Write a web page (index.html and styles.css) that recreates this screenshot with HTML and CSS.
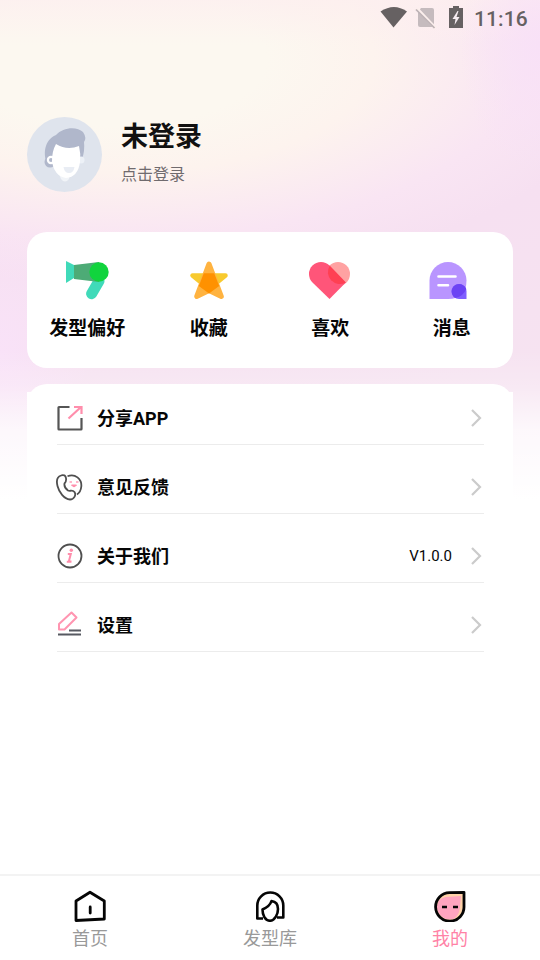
FILE: index.html
```html
<!DOCTYPE html>
<html lang="zh-CN">
<head>
<meta charset="utf-8">
<title>我的</title>
<link rel="stylesheet" href="styles.css">
</head>
<body>
<div class="screen">
  <header class="status">
    <svg width="28" height="24" viewBox="380 5 28 24"><path d="M380.500 11.500Q394 2.500 407 11.500L393.500 27.500Z" fill="#666162"/></svg>
    <svg width="22" height="24" viewBox="415 5 22 24"><path d="M421 8h11a2 2 0 0 1 2 2v15a2 2 0 0 1-2 2h-12a2 2 0 0 1-2-2V12Z" fill="#c5bbbe"/><path d="M417 8.500L435.500 28" stroke="#fcefed" stroke-width="3"/><path d="M416 9.500L434.500 28" stroke="#bdb2b5" stroke-width="1.700"/></svg>
    <svg width="16" height="24" viewBox="448 5 16 24"><path d="M449 8h4V6h6v2h4v20h-14Z" fill="#666162"/><path d="M457.500 11l-5 8h3l-1 6 5-8h-3l2-6Z" fill="#f7edf2"/></svg>
    <span class="clock">11:16</span>
  </header>
  <section class="profile">
    <svg class="avatar" viewBox="0 0 75 75">
      <circle cx="37.500" cy="37.500" r="37.500" fill="#dfe4ed"/>
      <path d="M20 47C16 37 17 23 29 18C36 10 50 9 56 15Q60 21 57 25Q58 34 55 42L22 47Z" fill="#b0b7cb"/>
      <circle cx="23" cy="45" r="5.500" fill="#b0b7cb"/>
      <circle cx="24" cy="43" r="4.200" fill="#fff"/><circle cx="24" cy="43" r="2" fill="#b0b7cb"/>
      <path d="M32 57h11l-1 5q-4 5-8 0Z" fill="#f1f4f8"/>
      <circle cx="54" cy="43" r="3.500" fill="#edf1f7"/>
      <path d="M29 27Q40 34 52 29Q54 37 53 45Q51 60 39 61Q27 59 25 44Q25 34 29 27Z" fill="#fff"/>
      <path d="M36.500 50h11q-1 6-5.500 6t-5.500-6Z" fill="#e9edf4"/>
    </svg>
    <div class="identity"><h1>未登录</h1><p>点击登录</p></div>
  </section>
  <nav class="shortcuts">
    <a class="shortcut">
      <svg viewBox="64 260 46 40"><path d="M99 281L91.600 293.700" stroke="#40dab9" stroke-width="11" stroke-linecap="round"/><path d="M66 261l8 4v13l-8 5Z" fill="#40dab9"/><path d="M74 265l25-3v20l-25-3Z" fill="#4dab76"/><circle cx="99" cy="272" r="9.700" fill="#11d43d"/></svg>
      <span>发型偏好</span>
    </a>
    <a class="shortcut">
      <svg viewBox="185.500 260 46 40"><path d="M192 275.500h33L208.500 289Z" fill="#f8ca2e" stroke="#f8ca2e" stroke-width="4.500" stroke-linejoin="round"/><path d="M208.500 264L220.800 296.500L208.500 290.500L196.200 296.500Z" fill="#ffb340" stroke="#ffb340" stroke-width="5" stroke-linejoin="round"/><path d="M203.300 273.300h10.400l5 12.700L208.500 293.500L198.300 286Z" fill="#ff9100"/></svg>
      <span>收藏</span>
    </a>
    <a class="shortcut">
      <svg viewBox="307 260 46 40"><circle cx="338" cy="274" r="12" fill="#ffa2a2"/><path d="M345.800 282.500L329.500 299L312.500 282.500A12 12 0 0 1 329.500 265.500Z" fill="#ff5579"/><path d="M329.700 265.700L345.800 282.500A12 12 0 0 1 329.700 265.700Z" fill="#ff4053"/></svg>
      <span>喜欢</span>
    </a>
    <a class="shortcut shifted">
      <svg viewBox="424.500 260 46 40"><path d="M429 299V280.500A18.500 18.500 0 0 1 466 280.500Q466 299 447.500 299Z" fill="#b995ff"/><path d="M438 276.500h17M438 285.200h9.500" stroke="#fff" stroke-width="2.600" stroke-linecap="round"/><path d="M458.500 284A7.500 7.500 0 1 0 458.500 299H466V291.500A7.500 7.500 0 0 0 458.500 284Z" fill="#805fff"/><path d="M465.700 289A7.500 7.500 0 1 0 455 298.100Q463 296 465.700 289Z" fill="#6c43f4"/></svg>
      <span>消息</span>
    </a>
  </nav>
  <main class="menu">
    <a class="row">
      <svg class="icon" viewBox="56 404 28 28" fill="none" stroke-width="2.200"><path d="M69.500 407H59q-.500 0-.500.500V429q0 .500.500.500h22q.500 0 .500-.500V418" stroke="#555"/><path d="M68.500 418.500L81 407M74 407h7.500v7" stroke="#ff8eac"/></svg>
      <span>分享APP</span>
      <svg class="arrow" viewBox="0 0 12 20"><path d="M2 2l8 8-8 8"/></svg>
    </a>
    <a class="row">
      <svg class="icon" viewBox="56 473 28 28" fill="none" stroke="#4f4f4f" stroke-width="1.800"><path d="M61 475.500C56.500 477 56.500 482 57.500 486C59 492 64 499 70 499.500C74 499.500 76.500 495 74.500 492C72.500 489.500 70 491.500 68 490.500C66 489 64 486 64.500 483.500C67 481 66.500 475.500 63.500 475.200Q62 475 61 475.500Z"/><path d="M67.500 476.300C75 473 82 479 81.300 486.500Q80.800 492 77 494.500"/><path d="M69.500 482h2.500M76 482h2.500" stroke="#ff9fb9" stroke-width="1.700"/><path d="M71.500 485q2.500 3.500 5 0Z" fill="#ff8eac" stroke="#ff8eac" stroke-width="1"/></svg>
      <span>意见反馈</span>
      <svg class="arrow" viewBox="0 0 12 20"><path d="M2 2l8 8-8 8"/></svg>
    </a>
    <a class="row">
      <svg class="icon" viewBox="56 542 28 28" fill="none"><circle cx="70" cy="556" r="11.500" stroke="#4f4f4f" stroke-width="1.800"/><path d="M67.800 554h3l-2 7.500h2.700M66.800 561.700h4.500" stroke="#ff8eac" stroke-width="2"/><circle cx="71.300" cy="550.300" r="1.700" fill="#ff8eac"/></svg>
      <span>关于我们</span><small>V1.0.0</small>
      <svg class="arrow" viewBox="0 0 12 20"><path d="M2 2l8 8-8 8"/></svg>
    </a>
    <a class="row">
      <svg class="icon" viewBox="56 611 28 28" fill="none" stroke-width="2" stroke-linejoin="round"><path d="M59 629.500V624L71.500 612.500L76.500 617.500L64.500 629.500Z" stroke="#ff95b1"/><path d="M69 630.500h12M58 634.500h23" stroke="#565961"/></svg>
      <span>设置</span>
      <svg class="arrow" viewBox="0 0 12 20"><path d="M2 2l8 8-8 8"/></svg>
    </a>
  </main>
  <footer class="tabs">
    <a class="tab">
      <svg viewBox="74 890 32 32" fill="none" stroke="#050505" stroke-width="2.800" stroke-linejoin="round"><path d="M90 892.200L104.300 901V919L76 920.500V901Z"/><path d="M90.200 907v6" stroke-linecap="round" stroke-width="2.800"/></svg>
      <span>首页</span>
    </a>
    <a class="tab">
      <svg viewBox="254 890 32 32" fill="none" stroke="#050505" stroke-width="2.600" stroke-linejoin="round"><path d="M263 918.500H257.300V905.500A13 13 0 0 1 283.300 905.500V917.500H277"/><path d="M271.500 901C270 906 266 908 262.500 909.500C262.500 915 265 920.500 270 920.800C275 920.500 278 914 278 909C278 904 275.500 901.500 271.500 901Z"/></svg>
      <span>发型库</span>
    </a>
    <a class="tab active">
      <svg viewBox="434 890 32 32"><path d="M464 892.300V905.500A14.500 14.500 0 1 1 449.500 892.700Z" fill="#ffd2a8"/><path d="M461 896L460 907Q459 919 450 919.500A13 13 0 0 1 437 906Q438 898 446 897Z" fill="#ffa4bf"/><path d="M464 892.300V906.500A14.200 14.200 0 1 1 449.500 892.700Z" fill="none" stroke="#050505" stroke-width="2.800" stroke-linejoin="round"/><path d="M442 907h5M453 907h5" stroke="#050505" stroke-width="2.600"/></svg>
      <span>我的</span>
    </a>
  </footer>
</div>
</body>
</html>
```
FILE: styles.css
```css
* { box-sizing: border-box; }
body { margin: 0; font-family: Roboto, "Noto Sans CJK SC", sans-serif; color: #060606; }
.screen {
  width: 540px;
  height: 960px;
  display: flex;
  flex-direction: column;
  background:
    linear-gradient(to bottom, transparent 350px, rgba(255,255,255,.2) 385px, rgba(255,255,255,.75) 430px, #fff 500px),
    radial-gradient(ellipse 90px 130px at 0 355px, #f9e2f8, transparent),
    radial-gradient(ellipse 80px 130px at 540px 45px, #f8e1f7, transparent),
    linear-gradient(to bottom, rgba(253,239,239,.8), transparent 45px),
    radial-gradient(ellipse 540px 235px at 115px 60px, #fcf8f0 0, #fcf8f0 28%, #fdf3ee 48%, #f9e5f3 76%, #f6e0f1 95%, #f6e3f1 150%);
}
.status { height: 36px; padding: 5px 12px 0 380px; display: flex; align-items: flex-start; }
.status svg { flex: none; }
.status svg + svg { margin-left: 7px; }
.status svg:nth-child(3) { margin-left: 11px; }
.clock { margin-left: 10px; padding-top: 1px; font-size: 21px; line-height: 27px; font-weight: 500; color: #666162; letter-spacing: .1px; white-space: nowrap; }
.profile { display: flex; padding: 81px 27px 0; height: 196px; gap: 19px; }
.avatar { width: 75px; height: 75px; flex: none; }
h1 { margin: 1px 0 0; font-size: 27px; line-height: 38px; font-weight: 700; color: #111; }
.identity p { margin: 7px 0 0; font-size: 16px; line-height: 24px; color: #706b6e; }
.shortcuts { margin: 0 27px; height: 136px; border-radius: 20px; background: #fff; display: grid; grid-template-columns: repeat(4, 1fr); padding: 28px 0 0; flex: none; }
.shortcut { display: flex; flex-direction: column; align-items: center; gap: 15px; font-size: 19px; line-height: 28px; font-weight: 700; margin-left: -1px; }
.shortcut svg { width: 46px; height: 40px; }
.shifted svg { margin-right: 8px; }
.menu {
  margin: 16px 27px 0;
  padding: 8px 29px 0 30px;
  border-radius: 20px 20px 0 0;
  position: relative;
  z-index: 0;
  background: #fff;
}
.menu::before { content: ""; position: absolute; inset: 8px 0 0; background: #fff; z-index: -1; }
.row { height: 53px; margin-bottom: 16px; border-bottom: 1px solid #ececec; display: flex; align-items: center; font-size: 18px; line-height: 28px; font-weight: 700; }
.row span { padding-top: 2px; }
.icon { width: 28px; height: 28px; margin: 0 13px 0 -1px; flex: none; }
.arrow { width: 12px; height: 20px; margin-left: auto; margin-right: 2.5px; fill: none; stroke: #cbcbcb; stroke-width: 2.2; }
.row small { margin-left: auto; font-size: 15px; font-weight: 400; }
.row small + .arrow { margin-left: 17.5px; }
.tabs { margin-top: auto; height: 86px; border-top: 2px solid #f3f3f3; display: grid; grid-template-columns: repeat(3, 1fr); background: #fff; }
.tab { display: flex; flex-direction: column; align-items: center; padding-top: 14px; font-size: 18px; line-height: 28px; color: #999; gap: 3px; }
.tab svg { width: 32px; height: 32px; }
.active { color: #ff82a6; }
```
